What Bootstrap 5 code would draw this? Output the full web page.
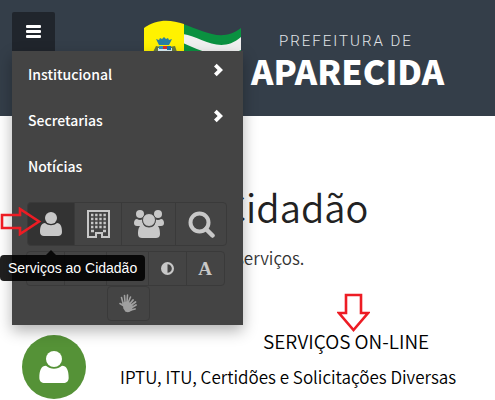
<!DOCTYPE html>
<html lang="pt-BR">
<head>
<meta charset="utf-8">
<meta name="viewport" content="width=device-width, initial-scale=1">
<title>Prefeitura de Aparecida</title>
<link href="https://cdn.jsdelivr.net/npm/bootstrap@5.3.0/dist/css/bootstrap.min.css" rel="stylesheet">
<style>
body { font-family: "Noto Sans CJK SC", sans-serif; color: #000; overflow: hidden; }
.site-head { background: #343e49; height: 116px; padding: 12px 12px 0; }
.menu-toggle { width: 43px; height: 39px; background: #20252c; border-radius: 2px 2px 0 0; }
.site-menu { top: 51px; left: 12px; width: 231px; height: 274px; background: #444; box-shadow: 0 6px 14px rgba(0,0,0,.3); z-index: 5; }
.menu-link { font-size: 14px; font-weight: 500; line-height: 22px; padding: 12px 16px; height: 46px; color: #fff; text-decoration: none; }
.tools { padding: 13px 0 0 15px; }
.tool { background: #444; border: 1px solid #3a3a3a; color: #c8c8c8; display: flex; align-items: center; justify-content: center; padding: 0; margin-right: -1px; }
.tool-lg { height: 44px; width: 48px; }
.tool-wide { width: 55px; }
.tool-mid { width: 52px; }
.tool-on { background: #333; }
.tool-sm { height: 35px; width: 39px; }
.tool-md { width: 43px; }
.tool-first { border-radius: 4px 0 0 4px; }
.tool-last { border-radius: 0 4px 4px 0; }
.tools-small { padding: 5px 6px 0 0; }
.letter { font: bold 19px/20px "Liberation Serif", serif; }
.tip { top: 255px; left: 0; padding: 0 8px; height: 26px; font: 14px/26px "Liberation Sans", sans-serif; color: #fff; background: rgba(0,0,0,.88); border-radius: 4px; z-index: 7; white-space: nowrap; }
.tip::before { content: ""; position: absolute; left: 46px; top: -5px; border: 5px solid transparent; border-top: 0; border-bottom-color: rgba(0,0,0,.88); }
.brand { margin-left: 89px; }
.brand-text { margin: 20px 0 0 10px; width: 195px; color: #fff; }
.brand-small { font: 300 15px/18px Roboto, sans-serif; letter-spacing: 2px; padding-left: 28px; color: #e2e5e8; white-space: nowrap; }
.brand-big { font: 900 34px/42px "Noto Sans CJK SC", sans-serif; }
.intro { padding-left: 222px; padding-top: 64px; }
.intro h1 { font-size: 38px; font-weight: 350; line-height: 54px; color: #222; margin: 0; }
.intro p { font-size: 17px; line-height: 24px; margin: 12px 0 0; padding-left: 14px; color: #333; font-weight: 350; }
.service { padding: 59px 0 0 22px; color: #000; text-decoration: none; }
.avatar { width: 64px; height: 64px; background: #559237; margin-top: 6px; }
.service-text { padding-left: 34px; white-space: nowrap; font-weight: 350; }
.service-name { font-size: 19px; line-height: 24px; padding-left: 143px; }
.service-info { font-size: 17px; line-height: 24px; margin-top: 12px; }
.arrow-side { left: 0; top: 207px; z-index: 8; }
.arrow-down { left: 337px; top: 293px; z-index: 8; }
</style>
<script src="https://cdn.jsdelivr.net/npm/bootstrap@5.3.0/dist/js/bootstrap.bundle.min.js"></script>
</head>
<body class="position-relative bg-white">
<svg width="0" height="0" class="position-absolute" aria-hidden="true">
  <symbol id="person" viewBox="0 0 22 24"><circle cx="11" cy="6" r="6"/><path d="M5 11c3.500 3 8.500 3 12 0 3.500 0 5 3.500 5 9 0 2.600-1.600 4-4 4H4c-2.400 0-4-1.400-4-4 0-5.500 1.500-9 5-9z"/></symbol>
  <symbol id="chevron" viewBox="0 0 10 14"><path d="M3 0L10 7 3 14 0 11 4 7 0 3z"/></symbol>
</svg>
<header class="site-head d-flex align-items-start">
  <button type="button" class="menu-toggle btn border-0 p-0 d-flex align-items-center justify-content-center flex-shrink-0" aria-label="Menu">
    <svg width="15" height="13" fill="#fff"><rect width="15" height="3" rx="1"/><rect y="5" width="15" height="3" rx="1"/><rect y="10" width="15" height="3" rx="1"/></svg>
  </button>
  <div class="brand d-flex align-items-start">
    <svg class="flex-shrink-0" width="97" height="70" viewBox="0 12 97 70" aria-hidden="true">
      <path d="M39 24C60 31 78 43 97 28V70H39z" fill="#0a9140"/>
      <path d="M39 34C58 37 76 55 97 37V50C76 62 56 50 39 43z" fill="#f0f0f0"/>
      <path d="M0 28C12 19 26 19 40 24V70H0z" fill="#fff200"/>
      <path d="M12 39l3 1 1-2 2 1 2-2 2 2 2-1 1 2 3-1-3 6H15z" fill="#277fa4"/>
      <path d="M9 52l3-6 5 1h8l6-1 2 6z" fill="#66793f"/>
      <rect x="14" y="48" width="14" height="6" fill="#d9edf5"/><rect x="15" y="46" width="4" height="3" fill="#288fc3"/><rect x="19" y="46" width="4" height="3" fill="#d72d2d"/><rect x="23" y="46" width="4" height="4" fill="#1c71a8"/>
    </svg>
    <div class="brand-text">
      <div class="brand-small">PREFEITURA DE</div>
      <div class="brand-big">APARECIDA</div>
    </div>
  </div>
</header>
<nav class="site-menu position-absolute" aria-label="Principal">
  <a href="#" class="menu-link d-flex justify-content-between">Institucional <svg class="me-1" width="9" height="14" fill="#fff"><use href="#chevron"/></svg></a>
  <a href="#" class="menu-link d-flex justify-content-between">Secretarias <svg class="me-1" width="9" height="14" fill="#fff"><use href="#chevron"/></svg></a>
  <a href="#" class="menu-link d-block">Notícias</a>
  <div class="tools d-flex">
    <button class="tool tool-lg tool-on tool-first" type="button" aria-label="Serviços ao Cidadão"><svg width="22" height="24" fill="currentColor"><use href="#person"/></svg></button>
    <button class="tool tool-lg" type="button" aria-label="Empresa"><svg width="23" height="28" viewBox="0 0 23 28"><path d="M1 1h21v26h-7v-4H9v4H1z" fill="none" stroke="currentColor" stroke-width="2"/><path d="M4 5h15M4 9h15M4 13h15M4 17h15" stroke="currentColor" stroke-width="2.400" stroke-dasharray="2.400 1.750"/><path d="M4 21h3M16 21h3" stroke="currentColor" stroke-width="2.400"/></svg></button>
    <button class="tool tool-lg tool-wide" type="button" aria-label="Servidor"><svg width="30" height="28" viewBox="0 0 30 28" fill="currentColor"><circle cx="6" cy="4" r="4"/><circle cx="24" cy="4" r="4"/><path d="M3 9q3 2 6 0c-1 3 0 5 1 7H3c-2 0-3-1-3-3s1-4 3-4zM27 9q-3 2-6 0c1 3 0 5-1 7h7c2 0 3-1 3-3s-1-4-3-4z"/><circle cx="15" cy="10" r="6.500" stroke="#444"/><path d="M9 15q6 5 12 0c4 0 5 4 5 9 0 3-2 4-4 4H8c-2 0-4-1-4-4 0-5 1-9 5-9z"/></svg></button>
    <button class="tool tool-lg tool-mid tool-last" type="button" aria-label="Buscar"><svg width="27" height="27" viewBox="0 0 27 27" fill="none" stroke="currentColor" stroke-width="4"><circle cx="11.500" cy="11.500" r="9"/><path d="M18 18l6.500 6.500" stroke-width="4.500" stroke-linecap="round"/></svg></button>
  </div>
  <div class="tools-small d-flex justify-content-center">
    <button class="tool tool-sm tool-first" type="button" aria-label="Mapa"></button>
    <button class="tool tool-sm tool-md" type="button" aria-label="Contato"></button>
    <button class="tool tool-sm tool-md" type="button" aria-label="Ajuda"></button>
    <button class="tool tool-sm" type="button" aria-label="Contraste"><svg width="13" height="13" viewBox="0 0 12 12"><circle cx="6" cy="6" r="5" fill="none" stroke="currentColor" stroke-width="2"/><path d="M6 1v10a5 5 0 0 1 0-10" fill="currentColor"/></svg></button>
    <button class="tool tool-sm tool-last" type="button"><span class="letter">A</span></button>
  </div>
  <div class="d-flex justify-content-center">
    <button class="tool tool-sm tool-md rounded-1" type="button" aria-label="Libras"><svg width="18" height="19" viewBox="0 0 18 19" fill="none" stroke="#a0a0a0" stroke-width="1.600" stroke-linecap="round"><path d="M4 9L2.500 3.500M6 8L5.500 1.500M8 8L8.500 1M9 9l2.500-6M5 12L1 9.500"/><path d="M7 13L4 10M9 12l5-6M11 12l5.500-4M12 14l5-3M12 16l4-1" stroke-width="1.800"/><path d="M5 9l4-1 4 4-1 4q-2 2-5 1l-2-3z" fill="#a0a0a0"/></svg></button>
  </div>
</nav>
<div class="tip position-absolute" role="tooltip">Serviços ao Cidadão</div>
<main>
  <section class="intro">
    <h1>Cidadão</h1>
    <p>serviços.</p>
  </section>
  <a href="#" class="service d-flex align-items-start">
    <span class="avatar rounded-circle d-flex align-items-center justify-content-center flex-shrink-0"><svg width="30" height="32" fill="#fff"><use href="#person"/></svg></span>
    <span class="service-text d-block">
      <span class="service-name d-block">SERVIÇOS ON-LINE</span>
      <span class="service-info d-block">IPTU, ITU, Certidões e Solicitações Diversas</span>
    </span>
  </a>
</main>
<svg class="arrow-side position-absolute" width="42" height="29" viewBox="0 0 42 29" fill="none" stroke="#ed1c24" stroke-width="2.600" aria-hidden="true"><path d="M2 8h18V2l19 12.500L20 27v-6H2z"/></svg>
<svg class="arrow-down position-absolute" width="33" height="39" viewBox="0 0 33 39" fill="none" stroke="#ed1c24" stroke-width="2.600" aria-hidden="true"><path d="M9 2h15v18h7L16.500 37 2 20h7z"/></svg>
</body>
</html>
